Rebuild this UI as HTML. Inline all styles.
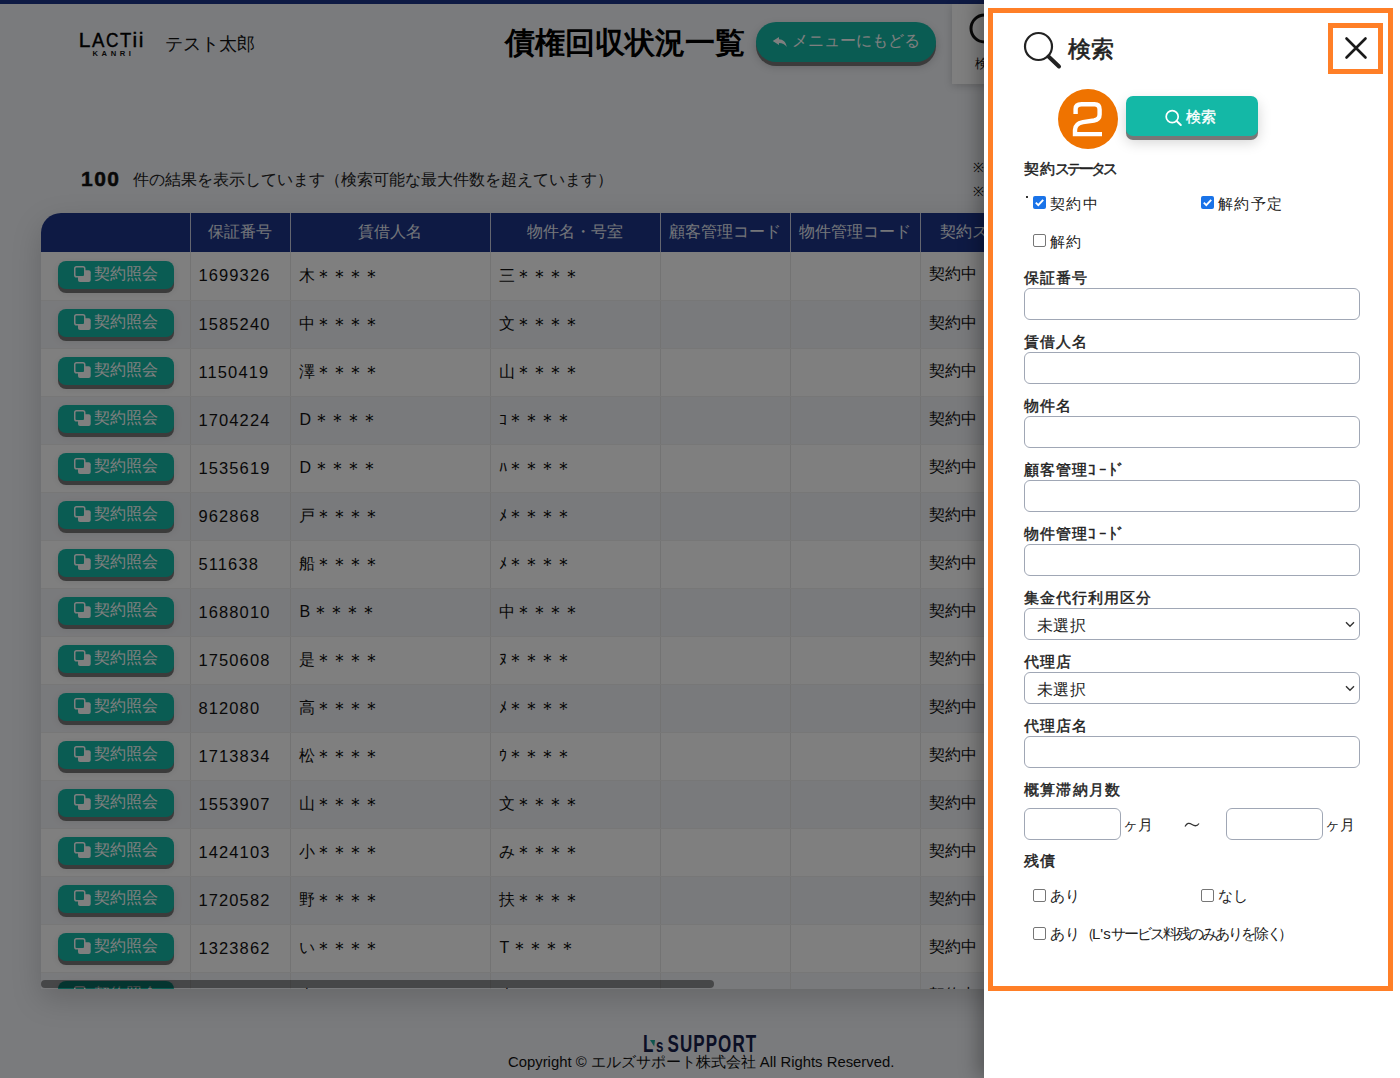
<!DOCTYPE html>
<html><head><meta charset="utf-8">
<style>
*{box-sizing:border-box;margin:0;padding:0}
html,body{width:1400px;height:1078px;overflow:hidden}
body{position:relative;background:#f4f6fa;font-family:"Liberation Sans",sans-serif;color:#111}
.abs{position:absolute}
#topbar{left:0;top:0;width:1400px;height:4px;background:#1c3488}
#logo{left:79px;top:28px;width:70px;height:24px;font-size:21px;line-height:24px;color:#000;-webkit-text-stroke:0.4px #000}
#kanri{left:92.5px;top:49px;font-size:7.6px;font-weight:bold;letter-spacing:3.6px;line-height:9px;color:#111}
#user{left:165px;top:32px;font-size:18px;line-height:24px;color:#111}
#title{left:505px;top:25px;font-size:30px;font-weight:bold;line-height:36px;color:#000}
#menubtn{left:756px;top:22px;width:180px;height:40px;border-radius:20px;background:#14b8a6;box-shadow:0 4px 0 #777,0 4px 10px rgba(0,0,0,.2);color:#fff;font-size:16px;line-height:40px}
#scard{left:952px;top:4px;width:120px;height:80px;background:#fff;box-shadow:0 2px 8px rgba(0,0,0,.18)}
#count{left:81px;top:166px;font-size:21px;font-weight:bold;line-height:26px;letter-spacing:1.5px;-webkit-text-stroke:0.5px #111}
#countt{left:133px;top:168px;font-size:16px;line-height:24px;color:#222}
.note{left:973px;font-size:13px;line-height:16px}
#tablewrap{left:41px;top:213px;width:1100px;height:776px;overflow:hidden;border-radius:20px 0 0 0;box-shadow:0 10px 30px rgba(0,0,0,.17);background:#fff}
table{border-collapse:collapse;table-layout:fixed;width:1100px}
th{background:#1c3488;color:#e8ecf4;font-weight:normal;font-size:16px;height:39px;border-left:1px solid #c8cde0;white-space:nowrap;overflow:hidden}
th:first-child{border-left:none}
td{height:48px;border-left:1px solid #e6e6e6;border-bottom:1px solid #efefef;font-size:16px;padding-left:8px;padding-bottom:2px;white-space:nowrap;color:#111;overflow:hidden}
tr:nth-child(odd) td{background:#fff}
tr:nth-child(even) td{background:#f3f4f8}
td:first-child{border-left:none;padding-left:17px;vertical-align:top;padding-top:9px}
tbody tr+tr td:first-child{padding-top:8px}
.btn{position:relative;display:block;width:116px;height:28px;border-radius:8px;background:#14b8a6;box-shadow:0 4px 0 #777,0 3px 8px rgba(0,0,0,.12);color:#fff;font-size:16px;line-height:26px;text-align:left;padding-left:36px}
.ast{font-size:19px;letter-spacing:-3px;position:relative;top:2px;margin-left:-1px}
.hw{margin-right:2px;margin-left:1px}
.num{letter-spacing:1.1px;font-size:16.5px;padding-bottom:0}
.ci{position:absolute;left:16px;top:5px}
#thumb{left:41px;top:980px;width:673px;height:8px;border-radius:4px;background:rgba(0,0,0,.42)}
#copy{left:508px;top:1052px;font-size:14.85px;line-height:20px;color:#111}
#overlay{left:0;top:0;width:1400px;height:1078px;background:rgba(0,0,0,.5)}
#panel{left:984px;top:0;width:416px;height:1078px;background:#fff;box-shadow:-6px 0 18px rgba(0,0,0,.3)}
.ob{border:5px solid #ff7f27}
.lbl{position:absolute;left:1024px;font-size:15px;line-height:20px;color:#222;letter-spacing:1px;-webkit-text-stroke:0.45px #222}
.inp{position:absolute;left:1024px;width:336px;height:32px;border:1px solid #a0a7b5;border-radius:6px;background:#fff}
.sel{font-size:16px;line-height:30px;padding-left:12px;padding-top:2px;color:#222;letter-spacing:0.3px}
.chev{position:absolute;right:4px;top:12px}
.cb{position:absolute;width:13px;height:13px;border-radius:2px}
.cb.on{background:#1a73e8}
.cb.off{border:1px solid #767676;background:#fff}
.hk{letter-spacing:2.5px}
.ct{position:absolute;font-size:15px;line-height:20px;color:#222;letter-spacing:1.3px}
</style></head><body>
<div id="topbar" class="abs"></div>
<div id="logo" class="abs"><span style="position:absolute;left:-0.2px;top:0;transform:scaleX(1.0);transform-origin:0 0">L</span><span style="position:absolute;left:12.6px;top:0;transform:scaleX(0.88);transform-origin:0 0">A</span><span style="position:absolute;left:27.2px;top:0;transform:scaleX(0.82);transform-origin:0 0">C</span><span style="position:absolute;left:40.6px;top:0;transform:scaleX(0.88);transform-origin:0 0">T</span><span style="position:absolute;left:53.6px;top:0;transform:scaleX(1.0);transform-origin:0 0">i</span><span style="position:absolute;left:59.8px;top:0;transform:scaleX(1.0);transform-origin:0 0">i</span></div>
<div id="kanri" class="abs">KANRI</div>
<div id="user" class="abs">テスト太郎</div>
<div id="title" class="abs">債権回収状況一覧</div>
<div id="menubtn" class="abs"><svg class="abs" style="left:16px;top:14px" width="16" height="12" viewBox="0 0 16 12"><path d="M0.7 4.9L7 0.9V3.2C11 3.2 14 6 14.8 10.9C12.8 8.2 10.5 6.9 7 6.9V8.9Z" fill="#fff"/></svg><span class="abs" style="left:36px;top:-1px">メニューにもどる</span></div>
<div id="scard" class="abs"><svg class="abs" style="left:16px;top:9px" width="40" height="32" viewBox="0 0 40 32"><circle cx="16.5" cy="15.5" r="13.5" fill="none" stroke="#111" stroke-width="3"/></svg><div class="abs" style="left:23px;top:50px;font-size:13px;line-height:20px;color:#111">検索</div></div>
<div id="count" class="abs">100</div>
<div id="countt" class="abs">件の結果を表示しています（検索可能な最大件数を超えています）</div>
<div class="abs note" style="top:160px">※</div>
<div class="abs note" style="top:184px">※</div>
<div id="tablewrap" class="abs"><table>
<colgroup><col style="width:149px"><col style="width:100px"><col style="width:200px"><col style="width:170px"><col style="width:130px"><col style="width:130px"><col style="width:152px"><col style="width:69px"></colgroup>
<thead><tr><th></th><th>保証番号</th><th>賃借人名</th><th>物件名・号室</th><th>顧客管理コード</th><th>物件管理コード</th><th>契約ステータス</th><th></th></tr></thead><tbody>
<tr><td><span class="btn"><svg class="ci" width="18" height="17" viewBox="0 0 18 17"><rect x="4" y="4.3" width="12.7" height="11.6" rx="2" fill="#fff"/><rect x="0.75" y="0.75" width="10" height="10" rx="1.8" fill="#14b8a6" stroke="#fff" stroke-width="1.5"/></svg>契約照会</span></td><td class="num">1699326</td><td>木<span class="ast">＊＊＊＊</span></td><td>三<span class="ast">＊＊＊＊</span></td><td></td><td></td><td>契約中</td><td></td></tr>
<tr><td><span class="btn"><svg class="ci" width="18" height="17" viewBox="0 0 18 17"><rect x="4" y="4.3" width="12.7" height="11.6" rx="2" fill="#fff"/><rect x="0.75" y="0.75" width="10" height="10" rx="1.8" fill="#14b8a6" stroke="#fff" stroke-width="1.5"/></svg>契約照会</span></td><td class="num">1585240</td><td>中<span class="ast">＊＊＊＊</span></td><td>文<span class="ast">＊＊＊＊</span></td><td></td><td></td><td>契約中</td><td></td></tr>
<tr><td><span class="btn"><svg class="ci" width="18" height="17" viewBox="0 0 18 17"><rect x="4" y="4.3" width="12.7" height="11.6" rx="2" fill="#fff"/><rect x="0.75" y="0.75" width="10" height="10" rx="1.8" fill="#14b8a6" stroke="#fff" stroke-width="1.5"/></svg>契約照会</span></td><td class="num">1150419</td><td>澤<span class="ast">＊＊＊＊</span></td><td>山<span class="ast">＊＊＊＊</span></td><td></td><td></td><td>契約中</td><td></td></tr>
<tr><td><span class="btn"><svg class="ci" width="18" height="17" viewBox="0 0 18 17"><rect x="4" y="4.3" width="12.7" height="11.6" rx="2" fill="#fff"/><rect x="0.75" y="0.75" width="10" height="10" rx="1.8" fill="#14b8a6" stroke="#fff" stroke-width="1.5"/></svg>契約照会</span></td><td class="num">1704224</td><td><span class="hw">D</span><span class="ast">＊＊＊＊</span></td><td>ｺ<span class="ast">＊＊＊＊</span></td><td></td><td></td><td>契約中</td><td></td></tr>
<tr><td><span class="btn"><svg class="ci" width="18" height="17" viewBox="0 0 18 17"><rect x="4" y="4.3" width="12.7" height="11.6" rx="2" fill="#fff"/><rect x="0.75" y="0.75" width="10" height="10" rx="1.8" fill="#14b8a6" stroke="#fff" stroke-width="1.5"/></svg>契約照会</span></td><td class="num">1535619</td><td><span class="hw">D</span><span class="ast">＊＊＊＊</span></td><td>ﾊ<span class="ast">＊＊＊＊</span></td><td></td><td></td><td>契約中</td><td></td></tr>
<tr><td><span class="btn"><svg class="ci" width="18" height="17" viewBox="0 0 18 17"><rect x="4" y="4.3" width="12.7" height="11.6" rx="2" fill="#fff"/><rect x="0.75" y="0.75" width="10" height="10" rx="1.8" fill="#14b8a6" stroke="#fff" stroke-width="1.5"/></svg>契約照会</span></td><td class="num">962868</td><td>戸<span class="ast">＊＊＊＊</span></td><td>ﾒ<span class="ast">＊＊＊＊</span></td><td></td><td></td><td>契約中</td><td></td></tr>
<tr><td><span class="btn"><svg class="ci" width="18" height="17" viewBox="0 0 18 17"><rect x="4" y="4.3" width="12.7" height="11.6" rx="2" fill="#fff"/><rect x="0.75" y="0.75" width="10" height="10" rx="1.8" fill="#14b8a6" stroke="#fff" stroke-width="1.5"/></svg>契約照会</span></td><td class="num">511638</td><td>船<span class="ast">＊＊＊＊</span></td><td>ﾒ<span class="ast">＊＊＊＊</span></td><td></td><td></td><td>契約中</td><td></td></tr>
<tr><td><span class="btn"><svg class="ci" width="18" height="17" viewBox="0 0 18 17"><rect x="4" y="4.3" width="12.7" height="11.6" rx="2" fill="#fff"/><rect x="0.75" y="0.75" width="10" height="10" rx="1.8" fill="#14b8a6" stroke="#fff" stroke-width="1.5"/></svg>契約照会</span></td><td class="num">1688010</td><td><span class="hw">B</span><span class="ast">＊＊＊＊</span></td><td>中<span class="ast">＊＊＊＊</span></td><td></td><td></td><td>契約中</td><td></td></tr>
<tr><td><span class="btn"><svg class="ci" width="18" height="17" viewBox="0 0 18 17"><rect x="4" y="4.3" width="12.7" height="11.6" rx="2" fill="#fff"/><rect x="0.75" y="0.75" width="10" height="10" rx="1.8" fill="#14b8a6" stroke="#fff" stroke-width="1.5"/></svg>契約照会</span></td><td class="num">1750608</td><td>是<span class="ast">＊＊＊＊</span></td><td>ﾇ<span class="ast">＊＊＊＊</span></td><td></td><td></td><td>契約中</td><td></td></tr>
<tr><td><span class="btn"><svg class="ci" width="18" height="17" viewBox="0 0 18 17"><rect x="4" y="4.3" width="12.7" height="11.6" rx="2" fill="#fff"/><rect x="0.75" y="0.75" width="10" height="10" rx="1.8" fill="#14b8a6" stroke="#fff" stroke-width="1.5"/></svg>契約照会</span></td><td class="num">812080</td><td>高<span class="ast">＊＊＊＊</span></td><td>ﾒ<span class="ast">＊＊＊＊</span></td><td></td><td></td><td>契約中</td><td></td></tr>
<tr><td><span class="btn"><svg class="ci" width="18" height="17" viewBox="0 0 18 17"><rect x="4" y="4.3" width="12.7" height="11.6" rx="2" fill="#fff"/><rect x="0.75" y="0.75" width="10" height="10" rx="1.8" fill="#14b8a6" stroke="#fff" stroke-width="1.5"/></svg>契約照会</span></td><td class="num">1713834</td><td>松<span class="ast">＊＊＊＊</span></td><td>ｳ<span class="ast">＊＊＊＊</span></td><td></td><td></td><td>契約中</td><td></td></tr>
<tr><td><span class="btn"><svg class="ci" width="18" height="17" viewBox="0 0 18 17"><rect x="4" y="4.3" width="12.7" height="11.6" rx="2" fill="#fff"/><rect x="0.75" y="0.75" width="10" height="10" rx="1.8" fill="#14b8a6" stroke="#fff" stroke-width="1.5"/></svg>契約照会</span></td><td class="num">1553907</td><td>山<span class="ast">＊＊＊＊</span></td><td>文<span class="ast">＊＊＊＊</span></td><td></td><td></td><td>契約中</td><td></td></tr>
<tr><td><span class="btn"><svg class="ci" width="18" height="17" viewBox="0 0 18 17"><rect x="4" y="4.3" width="12.7" height="11.6" rx="2" fill="#fff"/><rect x="0.75" y="0.75" width="10" height="10" rx="1.8" fill="#14b8a6" stroke="#fff" stroke-width="1.5"/></svg>契約照会</span></td><td class="num">1424103</td><td>小<span class="ast">＊＊＊＊</span></td><td>み<span class="ast">＊＊＊＊</span></td><td></td><td></td><td>契約中</td><td></td></tr>
<tr><td><span class="btn"><svg class="ci" width="18" height="17" viewBox="0 0 18 17"><rect x="4" y="4.3" width="12.7" height="11.6" rx="2" fill="#fff"/><rect x="0.75" y="0.75" width="10" height="10" rx="1.8" fill="#14b8a6" stroke="#fff" stroke-width="1.5"/></svg>契約照会</span></td><td class="num">1720582</td><td>野<span class="ast">＊＊＊＊</span></td><td>扶<span class="ast">＊＊＊＊</span></td><td></td><td></td><td>契約中</td><td></td></tr>
<tr><td><span class="btn"><svg class="ci" width="18" height="17" viewBox="0 0 18 17"><rect x="4" y="4.3" width="12.7" height="11.6" rx="2" fill="#fff"/><rect x="0.75" y="0.75" width="10" height="10" rx="1.8" fill="#14b8a6" stroke="#fff" stroke-width="1.5"/></svg>契約照会</span></td><td class="num">1323862</td><td>い<span class="ast">＊＊＊＊</span></td><td><span class="hw">T</span><span class="ast">＊＊＊＊</span></td><td></td><td></td><td>契約中</td><td></td></tr>
<tr><td><span class="btn"><svg class="ci" width="18" height="17" viewBox="0 0 18 17"><rect x="4" y="4.3" width="12.7" height="11.6" rx="2" fill="#fff"/><rect x="0.75" y="0.75" width="10" height="10" rx="1.8" fill="#14b8a6" stroke="#fff" stroke-width="1.5"/></svg>契約照会</span></td><td class="num">1400000</td><td>古<span class="ast">＊＊＊＊</span></td><td>大<span class="ast">＊＊＊＊</span></td><td></td><td></td><td>契約中</td><td></td></tr>
</tbody></table></div>
<div id="thumb" class="abs"></div>
<div class="abs" style="left:643px;top:1032px;width:115px;height:24px"><div class="abs" style="left:0;top:0;font-size:23px;line-height:24px;font-weight:bold;color:#16204a;transform:scaleX(0.74);transform-origin:0 0;letter-spacing:1.4px;white-space:nowrap">L<span style="font-size:18px;letter-spacing:0;margin-left:2px">s</span><span style="margin-left:-2px"> </span>SUPPORT</div><svg class="abs" style="left:7px;top:8px" width="6" height="7" viewBox="0 0 6 7"><path d="M0 0H5L4.2 6.5Z" fill="#1aa89a"/></svg></div>
<div id="copy" class="abs">Copyright © エルズサポート株式会社 All Rights Reserved.</div>
<div id="overlay" class="abs"></div>
<div id="panel" class="abs"></div>
<div class="abs ob" style="left:988px;top:8px;width:405px;height:983px"></div>
<svg class="abs" style="left:1020px;top:28px" width="46" height="46" viewBox="0 0 46 46"><circle cx="18.5" cy="18.5" r="13.5" fill="none" stroke="#222" stroke-width="2.2"/><line x1="28.5" y1="28.5" x2="39" y2="38.5" stroke="#222" stroke-width="4" stroke-linecap="round"/></svg>
<div class="abs" style="left:1068px;top:34px;font-size:23px;line-height:30px;color:#222;-webkit-text-stroke:0.6px #222">検索</div>
<div class="abs ob" style="left:1328px;top:23px;width:55px;height:51px"></div>
<svg class="abs" style="left:1344px;top:36px" width="24" height="24" viewBox="0 0 24 24"><path d="M2.5 2.5L21.5 21.5M21.5 2.5L2.5 21.5" stroke="#1a1a1a" stroke-width="2.6" stroke-linecap="round"/></svg>
<svg class="abs" style="left:1058px;top:89px" width="60" height="60" viewBox="0 0 60 60"><circle cx="30" cy="30" r="30" fill="#ef7300"/><path d="M17.6 25.1V20Q17.6 15.3 23.5 15.3H36.5Q41.6 15.3 41.6 20.5V25.5Q41.6 30.5 36 31.5L25 33.2Q17 34.8 17 41V45.1H44" fill="none" stroke="#fff" stroke-width="4.4" stroke-linejoin="miter"/></svg>
<div class="abs" style="left:1126px;top:96px;width:132px;height:40px;border-radius:7px;background:#14b8a6;box-shadow:0 4px 0 #777,0 6px 14px rgba(0,0,0,.18)"></div>
<svg class="abs" style="left:1164px;top:108px" width="20" height="20" viewBox="0 0 20 20"><circle cx="8.2" cy="8.7" r="6" fill="none" stroke="#fff" stroke-width="1.7"/><line x1="12.6" y1="13.1" x2="16.8" y2="17" stroke="#fff" stroke-width="2" stroke-linecap="round"/></svg>
<div class="abs" style="left:1186px;top:107px;font-size:15px;line-height:20px;color:#fff;-webkit-text-stroke:0.35px #fff">検索</div>
<div class="lbl" style="top:159px;letter-spacing:0.5px">契約<span style="letter-spacing:-2.9px">ステータス</span></div>
<div class="abs" style="left:1026px;top:196px;width:1.5px;height:1.5px;background:#333"></div>
<div class="cb on" style="left:1033px;top:196px"><svg width="13" height="13" viewBox="0 0 13 13" style="display:block"><path d="M2.8 6.6L5.3 9.1L10.2 3.8" fill="none" stroke="#fff" stroke-width="1.9"/></svg></div><div class="ct" style="left:1050px;top:194px">契約中</div>
<div class="cb on" style="left:1201px;top:196px"><svg width="13" height="13" viewBox="0 0 13 13" style="display:block"><path d="M2.8 6.6L5.3 9.1L10.2 3.8" fill="none" stroke="#fff" stroke-width="1.9"/></svg></div><div class="ct" style="left:1218px;top:194px">解約予定</div>
<div class="cb off" style="left:1033px;top:234px"></div><div class="ct" style="left:1050px;top:232px">解約</div>
<div class="lbl" style="top:268px">保証番号</div>
<div class="inp" style="top:288px"></div>
<div class="lbl" style="top:332px">賃借人名</div>
<div class="inp" style="top:352px"></div>
<div class="lbl" style="top:396px">物件名</div>
<div class="inp" style="top:416px"></div>
<div class="lbl" style="top:460px">顧客管理<span class="hk">ｺｰﾄﾞ</span></div>
<div class="inp" style="top:480px"></div>
<div class="lbl" style="top:524px">物件管理<span class="hk">ｺｰﾄﾞ</span></div>
<div class="inp" style="top:544px"></div>
<div class="lbl" style="top:588px">集金代行利用区分</div>
<div class="inp sel" style="top:608px">未選択<svg class="chev" width="10" height="7" viewBox="0 0 10 7"><path d="M1 1.2L5 5.2L9 1.2" fill="none" stroke="#333" stroke-width="1.4"/></svg></div>
<div class="lbl" style="top:652px">代理店</div>
<div class="inp sel" style="top:672px">未選択<svg class="chev" width="10" height="7" viewBox="0 0 10 7"><path d="M1 1.2L5 5.2L9 1.2" fill="none" stroke="#333" stroke-width="1.4"/></svg></div>
<div class="lbl" style="top:716px">代理店名</div>
<div class="inp" style="top:736px"></div>
<div class="lbl" style="top:780px;letter-spacing:1.2px">概算滞納月数</div>
<div class="inp" style="top:808px;width:97px"></div><div class="ct" style="left:1123px;top:815px;letter-spacing:0">ヶ月</div>
<svg class="abs" style="left:1184px;top:820px" width="16" height="10" viewBox="0 0 16 10"><path d="M1 6.5C3 3 5 2.5 8 4.5S13 6.5 15 3.5" fill="none" stroke="#333" stroke-width="1.2"/></svg>
<div class="inp" style="left:1226px;top:808px;width:97px"></div><div class="ct" style="left:1325px;top:815px;letter-spacing:0">ヶ月</div>
<div class="lbl" style="top:851px">残債</div>
<div class="cb off" style="left:1033px;top:889px"></div><div class="ct" style="left:1050px;top:886px;letter-spacing:0">あり</div>
<div class="cb off" style="left:1201px;top:889px"></div><div class="ct" style="left:1218px;top:886px;letter-spacing:0">なし</div>
<div class="cb off" style="left:1033px;top:927px"></div><div class="ct" style="left:1050px;top:924px;letter-spacing:0">あり<span style="letter-spacing:-3px">（</span>L's<span style="letter-spacing:-2px">サービス料残のみありを除く</span><span style="margin-left:-2px">）</span></div>
</body></html>
